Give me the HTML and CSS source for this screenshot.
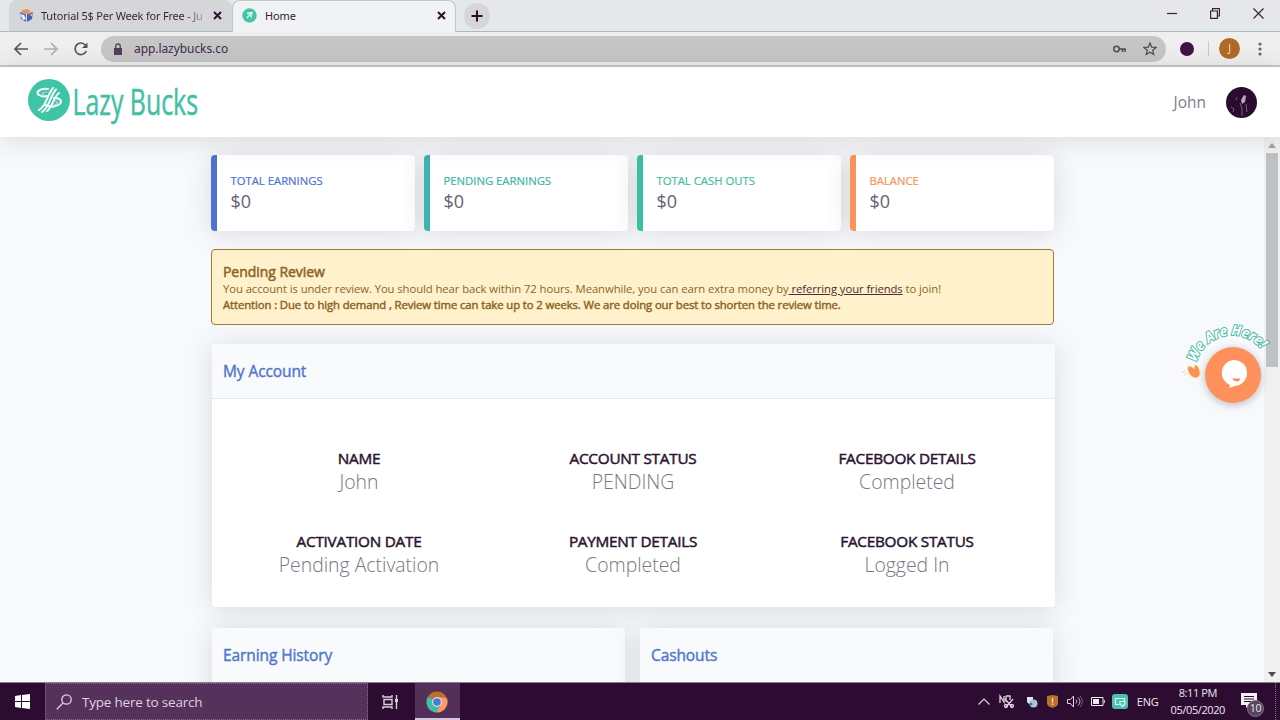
FILE: index.html
```html
<!DOCTYPE html>
<html lang="en">
<head>
	<meta charset="UTF-8">
	<title>Home</title>
	<link rel="stylesheet" href="styles.css">
</head>
<body>
	<!-- browser tabs -->
	<div class="tab-bar">
		<div class="tab">
			<svg class="tab-icon" width="15" height="15" viewBox="0 0 15 15"><path d="M1 4l6 2v8l-5-3z" fill="#4d76d0"/><path d="M8 6l6-2-1 7-5 3z" fill="#4a5fae"/><path d="M3 2l5-1 4 2-4 3-5-1z" fill="#f0924f"/><path d="M1 6l4 1 2 4-3 1z" fill="#e8eefb"/><path d="M10 7l4-2-1 3z" fill="#ffb070"/></svg>
			<span class="tab-title tab-fade">Tutorial 5$ Per Week for Free - Ju</span>
			<svg class="tab-close" width="9" height="9" viewBox="0 0 9 9"><path d="M1 1l7 7M8 1l-7 7"/></svg>
		</div>
		<div class="tab active">
			<svg class="tab-icon" width="15" height="15" viewBox="0 0 15 15"><circle cx="7.500" cy="7.500" r="7.200" fill="#42c4a7"/><path d="M5 5.500l5-1-1 5M9 5l-4 5" stroke="#d8f3ec" stroke-width="1.500" fill="none"/></svg>
			<span class="tab-title">Home</span>
			<svg class="tab-close" width="9" height="9" viewBox="0 0 9 9"><path d="M1 1l7 7M8 1l-7 7"/></svg>
		</div>
		<div class="new-tab">
			<svg width="12" height="12" viewBox="0 0 12 12"><path d="M6 0.500v11M0.500 6h11" stroke="#2c0d31" stroke-width="2"/></svg>
		</div>
		<div class="window-buttons">
			<svg width="10" height="11" viewBox="0 0 10 11"><path d="M0 5.500h10"/></svg>
			<svg width="10" height="11" viewBox="0 0 10 11"><path d="M0.600 3h6.800v7.400h-6.800zM2.500 3v-2.400h6.900v7.400h-2"/></svg>
			<svg width="11" height="11" viewBox="0 0 11 11"><path d="M0.500 0.500l10 10M10.500 0.500l-10 10"/></svg>
		</div>
	</div>
	<div class="toolbar">
		<div class="nav-buttons">
			<svg width="14" height="14" viewBox="0 0 14 14"><path d="M14 7H1.500M7 1L1 7l6 6"/></svg>
			<svg class="disabled" width="14" height="14" viewBox="0 0 14 14"><path d="M0 7h12.500M7 1l6 6-6 6"/></svg>
			<svg width="14" height="14" viewBox="0 0 14 14"><path d="M12.300 9A5.800 5.800 0 1 1 11.500 3.200L12.500 4.400"/><path d="M13.500 0.500v5.500h-5.500z" class="solid"/></svg>
		</div>
		<div class="address">
			<svg width="8" height="12" viewBox="0 0 8 12"><path d="M0 5h8v7H0z" fill="#51405c"/><path d="M1.800 5.500V3a2.200 2.200 0 0 1 4.400 0v2.500" fill="none" stroke="#51405c" stroke-width="1.300"/></svg>
			<span class="url">app.lazybucks.co</span>
			<svg class="key" width="13" height="8" viewBox="0 0 13 8"><circle cx="3.500" cy="4" r="2.700"/><path d="M6.200 4H12v3M9.500 4v3"/></svg>
			<svg class="star" width="14" height="14" viewBox="0 0 14 14"><path d="M7 1l1.700 4.100 4.400.3-3.400 2.800 1.100 4.300L7 10.200l-3.800 2.300 1.100-4.300L.9 5.400l4.400-.3z"/></svg>
		</div>
		<span class="extension"></span>
		<span class="divider"></span>
		<span class="profile">J</span>
		<svg class="menu-dots" width="4" height="14" viewBox="0 0 4 14"><circle cx="2" cy="2" r="1.600"/><circle cx="2" cy="7" r="1.600"/><circle cx="2" cy="12" r="1.600"/></svg>
	</div>

	<!-- site header -->
	<div class="site-header">
		<div class="logo">
			<svg width="260" height="64" viewBox="0 -7 260 64">
				<circle cx="21" cy="23" r="21" fill="#3ec5a5"/>
				<g fill="none" stroke="#f4fbfa" stroke-width="2" stroke-linecap="round">
					<path d="M25 11C20 16 18 30 11 33"/>
					<path d="M28 12.500C23 17 21 31 14 35"/>
					<path d="M31 16C26 19 24 31 19 34"/>
					<path d="M20 12C11 11 7 16 11 18c3 2 5 2 8 1"/>
					<path d="M26 21c8 0 9 5 4 7-3 2-8 2-13 0"/>
					<path d="M26 24c4 0 4 3 0 4" stroke="#c8cfe0" stroke-width="1.200"/>
					<path d="M19 15c-5 0-6 2-3 3" stroke="#c8cfe0" stroke-width="1.200"/>
				</g>
				<text x="44.500" y="38" textLength="125.500" lengthAdjust="spacingAndGlyphs" class="logo-text">Lazy Bucks</text>
			</svg>
		</div>
		<span class="user-name">John</span>
		<svg class="avatar" width="31" height="31" viewBox="0 0 31 31"><circle cx="15.500" cy="15.500" r="15.500" fill="#2c0b31"/><path d="M18 8l2 1-1 6-3 2-1-4z" fill="#b9aabd"/><path d="M14 16l2 5v8M20 17l1 8M5 20l3 2-1 3M11 10l-1 3" stroke="#77617d" fill="none"/></svg>
	</div>

	<div class="page">
		<div class="content">
			<div class="stats">
				<div class="stat blue">
					<div class="stat-label">TOTAL EARNINGS</div>
					<div class="stat-value">$0</div>
				</div>
				<div class="stat teal">
					<div class="stat-label">PENDING EARNINGS</div>
					<div class="stat-value">$0</div>
				</div>
				<div class="stat green">
					<div class="stat-label">TOTAL CASH OUTS</div>
					<div class="stat-value">$0</div>
				</div>
				<div class="stat orange">
					<div class="stat-label">BALANCE</div>
					<div class="stat-value">$0</div>
				</div>
			</div>
			<div class="alert">
				<div class="alert-title">Pending Review</div>
				<div class="alert-text">You account is under review. You should hear back within 72 hours. Meanwhile, you can earn extra money by<a href="#"> referring your friends</a> to join!</div>
				<div class="alert-note">Attention : Due to high demand , Review time can take up to 2 weeks. We are doing our best to shorten the review time.</div>
			</div>
			<div class="panel account">
				<div class="panel-header">My Account</div>
				<div class="details">
					<div class="detail"><b>NAME</b><span>John</span></div>
					<div class="detail"><b>ACCOUNT STATUS</b><span>PENDING</span></div>
					<div class="detail"><b>FACEBOOK DETAILS</b><span>Completed</span></div>
					<div class="detail"><b>ACTIVATION DATE</b><span>Pending Activation</span></div>
					<div class="detail"><b>PAYMENT DETAILS</b><span>Completed</span></div>
					<div class="detail"><b>FACEBOOK STATUS</b><span>Logged In</span></div>
				</div>
			</div>
			<div class="bottom-row">
				<div class="panel"><div class="panel-header">Earning History</div></div>
				<div class="panel"><div class="panel-header">Cashouts</div></div>
			</div>
		</div>
		<div class="scrollbar">
			<svg width="8" height="5" viewBox="0 0 8 5"><path d="M0 5l4-5 4 5z" fill="#a3a3a6"/></svg>
			<div class="thumb"></div>
			<svg width="8" height="5" viewBox="0 0 8 5"><path d="M0 0l4 5 4-5z" fill="#4f4a53"/></svg>
		</div>
		<!-- chat bubble -->
		<svg class="chat" width="100" height="110" viewBox="0 -10 100 110">
			<defs><path id="arc" d="M16.300 42.400A37 37 0 0 1 87.700 42.400"/></defs>
			<text class="chat-text"><textPath href="#arc" textLength="81" lengthAdjust="spacingAndGlyphs">We Are Here!</textPath></text>
			<path d="M7 48c2-2 4 0 6 2l1-4c3 0 5 6 5 9-1 3-4 5-7 3-3-1-6-7-5-10z" transform="translate(1 -1)" fill="#ff8f58" stroke="#ffd27c"/>
			<path d="M7 53l-3 2M5 51l-3 1" stroke="#ffd27c" fill="none"/>
			<circle class="chat-disc" cx="53" cy="55" r="28"/>
			<path d="M53 40a13 13 0 0 1 2 26l-6 2 1-3a13 13 0 0 1 3-25z" fill="#fff"/>
			<path d="M52 58.500h8.500c-1 4-6 4-8.500 0z" fill="#f98b54"/>
		</svg>
	</div>

	<!-- taskbar -->
	<div class="taskbar">
		<div class="start">
			<svg width="15" height="15" viewBox="0 0 15 15"><path d="M0 2l6-.9v6H0zM7 1l8-1v7.100H7zM0 8h6v6L0 13.100zM7 8h8v7l-8-1z" fill="#fff"/></svg>
		</div>
		<div class="search">
			<svg width="16" height="16" viewBox="0 0 16 16"><circle cx="10.500" cy="5.500" r="4.700"/><path d="M7 9L.8 15.200"/></svg>
			<span>Type here to search</span>
		</div>
		<div class="task-view">
			<svg width="16" height="14" viewBox="0 0 16 14" fill="none" stroke="#d9d0dc" stroke-width="1.400"><path d="M1 0v2h9V0M1 14v-2h9v2M2 4.500h8v5H2zM14.500 0v14"/><path d="M13 4h3v3h-3z" fill="#d9d0dc" stroke="none"/></svg>
		</div>
		<div class="task-app">
			<svg width="22" height="22" viewBox="0 0 22 22"><path d="M11 11L2 5.500A10.500 10.500 0 0 1 20.200 5.800z" fill="#bd702d"/><path d="M11 11L2 5.500A10.500 10.500 0 0 0 10 21.500l5-7z" fill="#42bea2"/><path d="M11 6.500h9.500A10.500 10.500 0 0 1 10 21.500l5-8z" fill="#ff9862"/><circle cx="11" cy="11" r="5" fill="#d8dded"/><circle cx="11" cy="11" r="3.800" fill="#4c79d5"/></svg>
		</div>
		<div class="tray">
			<svg class="t-up" width="12" height="7" viewBox="0 0 12 7"><path d="M.5 6.500L6 1l5.500 5.500" fill="none" stroke="#ddd5df" stroke-width="1.200"/></svg>
			<svg class="t-cut" width="16" height="15" viewBox="0 0 16 15" fill="none" stroke="#ddd5df" stroke-width="1.300"><path d="M1 9V2l4 6V2M7 2v6M7 2h4v4M6 5l7 8M14 5l-7 8"/><circle cx="7" cy="12" r="1.500"/><circle cx="13" cy="12" r="1.500"/></svg>
			<svg class="t-dev" width="12" height="12" viewBox="0 0 12 12"><path d="M1 1h6v7H3L1 6z" fill="#dbe8e9"/><circle cx="7.500" cy="7.500" r="4" fill="#a7c7d8"/><circle cx="5" cy="8" r="1.500" fill="#4b6f91"/></svg>
			<svg class="t-shield" width="11" height="13" viewBox="0 0 11 13"><path d="M0 1l5.500-1L11 1v7c0 3-3 4-5.500 5C3 12 0 11 0 8z" fill="#b9712e"/><path d="M5.500 3v4.500M5.500 8.500v1.500" stroke="#ffd9ac" stroke-width="1.400"/></svg>
			<svg class="t-sound" width="16" height="13" viewBox="0 0 16 13" fill="none" stroke="#ddd5df"><path d="M.5 4.500h3l3-3.500v11l-3-3.500h-3zM9 4.500c1 1.500 1 3 0 4M11 2.500c2.500 2.500 2.500 5.500 0 8"/><path d="M13 1c3 3 3 8 0 11" stroke="#786080"/></svg>
			<svg class="t-battery" width="14" height="9" viewBox="0 0 14 9"><path d="M.5.500h11.500v8H.5zM13.300 3v3" fill="none" stroke="#eee8ef"/><path d="M2 2h6v5H2z" fill="#eee8ef"/></svg>
			<svg class="t-green" width="16" height="15" viewBox="0 0 16 15"><rect width="16" height="15" rx="3" fill="#48c4ae"/><path d="M7 10.500H3.500v-6h9V7M8 7.500h5v2.500l-2.500 2.500L8 10z" fill="none" stroke="#e5fcf6" stroke-width="1.200"/></svg>
			<span class="lang">ENG</span>
			<div class="clock"><span>8:11 PM</span><span>05/05/2020</span></div>
			<div class="notify">
				<svg width="16" height="16" viewBox="0 0 16 16"><path d="M0 0h16v12H8l-3 3v-3H0z" fill="#f4eff5"/><path d="M3 3.500h10M3 6h10M3 8.500h7" stroke="#2e0d32"/></svg>
				<span class="count">10</span>
			</div>
		</div>
	</div>
</body>
</html>
```

FILE: styles.css
```css
/* reset */
* {
	margin: 0;
	padding: 0;
	box-sizing: border-box;
}
body {
	display: flex;
	flex-direction: column;
	width: 1280px;
	height: 720px;
	overflow: hidden;
	font-family: "Open Sans", "Noto Sans", sans-serif;
	background: #f8f9fc;
	white-space: nowrap;
}
svg {
	display: block;
	flex: none;
}

/* browser */
.tab-bar {
	display: flex;
	height: 32px;
	background: #e6e7e9;
	border-bottom: 1px solid #a9bbbf;
}
.tab {
	display: flex;
	align-items: center;
	width: 223px;
	height: 31px;
	margin-left: 9px;
	padding: 0 10px 0 10px;
	border-radius: 8px 8px 0 0;
	background: #d5d6d8;
	color: #35203c;
}
.tab.active {
	height: 32px;
	width: 224px;
	margin-left: 0;
	padding: 0 9px 2px;
	background: #f1f2f3;
	border: 1px solid #bccacc;
	border-bottom: none;
}
.tab-title {
	flex: 1;
	margin-left: 8px;
	font: 11px "Noto Sans", sans-serif;
	letter-spacing: -.1px;
}
.tab-fade {
	flex: none;
	width: 165px;
	margin: 0 7px;
	letter-spacing: -.2px;
	color: transparent;
	background: linear-gradient(90deg, #35203c 88%, #aaa5ad 98%);
	-webkit-background-clip: text;
	background-clip: text;
}
.tab-close {
	stroke: #2c1233;
	stroke-width: 2;
}
.new-tab {
	display: flex;
	align-items: center;
	justify-content: center;
	width: 26px;
	height: 26px;
	margin: 3px 0 0 8px;
	border-radius: 50%;
	background: #d6d6d8;
}
.window-buttons {
	display: flex;
	gap: 33px;
	margin: 8px 16px 0 auto;
	fill: none;
	stroke: #39213f;
	stroke-width: 1.200;
}
.toolbar {
	display: flex;
	align-items: center;
	height: 35px;
	padding: 0 18px 0 14px;
	background: #efeff0;
	border-bottom: 2px solid #c6c6c8;
}
.nav-buttons {
	display: flex;
	gap: 16px;
	fill: none;
	stroke: #5a5260;
	stroke-width: 1.700;
}
.nav-buttons .disabled {
	stroke: #b1b1b4;
}
.nav-buttons .solid {
	fill: #5a5260;
	stroke: none;
}
.address {
	display: flex;
	align-items: center;
	width: 1065px;
	height: 26px;
	margin-left: 13px;
	padding: 0 9px 0 13px;
	border-radius: 13px;
	background: #c6c6c7;
}
.url {
	margin-left: 12px;
	font: 12px "Noto Sans", sans-serif;
	letter-spacing: -.07px;
	color: #422b4b;
}
.key {
	margin-left: auto;
	fill: none;
	stroke: #55465e;
	stroke-width: 1.500;
}
.star {
	margin-left: 17px;
	fill: none;
	stroke: #55465e;
	stroke-width: 1.200;
}
.extension {
	width: 14px;
	height: 14px;
	margin-left: 14px;
	border-radius: 50%;
	background: #431346;
}
.divider {
	width: 1px;
	height: 15px;
	margin-left: 14px;
	background: #c6c9d0;
}
.profile {
	width: 21px;
	height: 21px;
	margin-left: 10px;
	border-radius: 50%;
	background: #b16a25;
	color: #f7e2cd;
	font-size: 10px;
	line-height: 21px;
	text-align: center;
}
.menu-dots {
	margin-left: auto;
	fill: #68616d;
}

/* site header */
.site-header {
	position: relative;
	z-index: 1;
	display: flex;
	align-items: center;
	height: 70px;
	padding: 0 23px 0 28px;
	background: #fff;
	box-shadow: 0 2px 26px rgba(60, 62, 66, .17);
}
.logo-text {
	font: 400 37px "Open Sans", sans-serif;
	fill: #42c0a4;
	stroke: #42c0a4;
	stroke-width: .5;
}
.user-name {
	margin-left: auto;
	font-size: 15.500px;
	color: #7f7d87;
}
.avatar {
	margin-left: 20px;
}

/* dashboard */
.page {
	position: relative;
	display: flex;
	height: 545px;
	overflow: hidden;
}
.content {
	width: 1264px;
	padding: 18px 209px 0 211px;
}
.stats {
	display: grid;
	grid-template-columns: repeat(4, 204px);
	gap: 9px;
}
.stat {
	height: 76px;
	padding: 17px 13.500px;
	border-left: 6px solid;
	border-radius: 4px;
	background: #fff;
	box-shadow: 0 2px 26px rgba(60, 62, 66, .16);
}
.stat-label {
	font-size: 11.3px;
	line-height: 17px;
	-webkit-text-stroke: .2px;
}
.stat-value {
	font-size: 18px;
	line-height: 25px;
	color: #656171;
}
.blue {
	color: #4d72d3;
}
.teal {
	color: #3cb5a8;
	border-color: #3eb2b5;
}
.green {
	color: #3bbfa2;
}
.orange {
	color: #fb935c;
}
.alert {
	width: 843px;
	height: 76px;
	margin-top: 18px;
	padding: 13px 11px;
	border: 1px solid #9c7e3d;
	border-radius: 4px;
	background: #fef1cc;
	color: #8f6425;
	font-size: 11.300px;
	line-height: 16px;
}
.alert-title {
	font-size: 14px;
	line-height: 18px;
	letter-spacing: -.05px;
	-webkit-text-stroke: .5px;
}
.alert-text {
	letter-spacing: -.08px;
}
.alert a {
	color: #4f2c30;
}
.alert-note {
	letter-spacing: -.087px;
	-webkit-text-stroke: .45px;
}
.panel {
	border-radius: 4px;
	background: #fff;
	box-shadow: 0 2px 26px rgba(60, 62, 66, .16);
	overflow: hidden;
}
.account {
	width: 843px;
	height: 263px;
	margin: 19px 0 0 1px;
}
.panel-header {
	height: 55px;
	padding-left: 11px;
	background: #f8fafc;
	border-bottom: 1px solid #e6eaee;
	color: #5076cd;
	font-size: 15.500px;
	letter-spacing: -.1px;
	line-height: 55px;
	-webkit-text-stroke: .4px;
}
.details {
	display: grid;
	grid-template-columns: repeat(3, 274px);
	grid-auto-rows: 83px;
	padding: 48px 10px 0;
	text-align: center;
}
.detail b {
	display: block;
	color: #2b1432;
	font-size: 15.300px;
	font-weight: 400;
	line-height: 22px;
	letter-spacing: -.25px;
	-webkit-text-stroke: .5px;
}
.detail span {
	display: block;
	color: #777784;
	font-size: 19.400px;
	font-weight: 300;
	line-height: 26px;
}
.bottom-row {
	display: flex;
	gap: 15px;
	margin: 21px 0 0 1px;
}
.bottom-row .panel {
	width: 413px;
	height: 100px;
}
.scrollbar {
	display: flex;
	flex-direction: column;
	align-items: center;
	width: 16px;
	padding: 6px 0 5px;
	background: #f0f0f1;
}
.thumb {
	width: 12px;
	height: 214px;
	margin: 5px 0 auto;
	background: #bfc2c5;
}
.chat {
	position: absolute;
	left: 1180px;
	top: 173px;
}
.chat-disc {
	fill: #fe915b;
	filter: drop-shadow(0 2px 4px rgba(0, 0, 0, .25));
}
.chat-text {
	font: italic 700 14px "Open Sans", sans-serif;
	fill: #fff;
	stroke: #4bb9a6;
	stroke-width: 2;
	paint-order: stroke;
}

/* taskbar */
.taskbar {
	position: relative;
	z-index: 2;
	display: flex;
	height: 38px;
	background: #2d0c31;
	border-top: 1px solid #8f7b93;
	font-family: "Open Sans", sans-serif;
	color: #eee8ef;
}
.start {
	width: 45px;
	padding: 11px 0 0 15px;
}
.search {
	display: flex;
	align-items: center;
	gap: 10px;
	width: 323px;
	padding-left: 10px;
	border: 1px dotted #8a6a8e;
	background: #55325c;
	color: #ddd2df;
	font-size: 13.500px;
	letter-spacing: -.2px;
}
.search svg {
	fill: none;
	stroke: #ddd2df;
	stroke-width: 1.300;
}
.task-view {
	width: 47px;
	padding: 12px 0 0 14px;
}
.task-app {
	width: 45px;
	padding: 8px 0 0 11px;
	background: #533059;
	border-bottom: 2px solid #d6c8d8;
}
.tray {
	display: flex;
	align-items: center;
	margin: 0 4px 0 auto;
	padding-right: 3px;
	border-right: 1px dotted #8a6a8e;
}
.t-cut {
	margin-left: 9px;
}
.t-dev {
	margin-left: 11px;
}
.t-shield {
	margin-left: 9px;
}
.t-sound {
	margin-left: 9px;
}
.t-battery {
	margin-left: 8px;
}
.t-green {
	margin-left: 7px;
}
.lang {
	margin-left: 9px;
	font-size: 11px;
	letter-spacing: -.2px;
}
.clock {
	display: flex;
	flex-direction: column;
	align-items: center;
	margin: -2px 0 0 12px;
	font-size: 11px;
	line-height: 17px;
	letter-spacing: -.4px;
}
.notify {
	position: relative;
	width: 31px;
	margin-left: 16px;
}
.notify svg {
	margin-top: -2px;
}
.count {
	position: absolute;
	left: 6px;
	top: 5px;
	width: 17px;
	height: 17px;
	border: 1px solid #80708a;
	border-radius: 50%;
	background: #55475b;
	font-size: 10.500px;
	line-height: 14px;
	letter-spacing: -.3px;
	text-align: center;
}
```
